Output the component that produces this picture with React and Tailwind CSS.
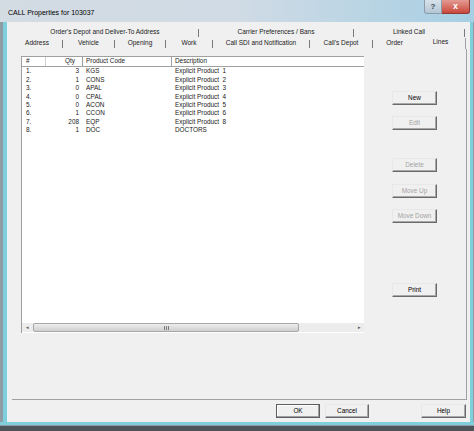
import React from 'react';

const rows = [
  ['1.', '3', 'KGS', 'Explicit Product  1'],
  ['2.', '1', 'CONS', 'Explicit Product  2'],
  ['3.', '0', 'APAL', 'Explicit Product  3'],
  ['4.', '0', 'CPAL', 'Explicit Product  4'],
  ['5.', '0', 'ACON', 'Explicit Product  5'],
  ['6.', '1', 'CCON', 'Explicit Product  6'],
  ['7.', '208', 'EQP', 'Explicit Product  8'],
  ['8.', '1', 'DOC', 'DOCTORS'],
];

const Sep = () => <div className="w-px h-[8px] bg-[#7a7a7a] shrink-0" />;

const Tab = ({ w, label, sep = true }) => (
  <div className="flex items-center shrink-0" style={{ width: w }}>
    <div className="flex-1 text-center whitespace-pre">{label}</div>
    {sep && <Sep />}
  </div>
);

const Btn = ({ label, disabled, className = '' }) => (
  <div
    className={`h-[14px] flex items-center justify-center bg-[#f0f0f0] border border-t-[#e8e8e8] border-l-[#e8e8e8] border-r-[#6a6a6a] border-b-[#6a6a6a] shadow-[inset_-1px_-1px_0_#a8a8a8] ${disabled ? 'text-[#a3a3a3]' : 'text-black'} ${className}`}
  >
    {label}
  </div>
);

export default function App() {
  return (
    <div
      className="w-[474px] h-[431px] flex flex-col overflow-hidden bg-[#9aa7b0] text-[6.4px] leading-none text-black"
      style={{ fontFamily: '"Liberation Sans", Arial, sans-serif' }}
    >
      {/* TITLE BAR */}
      <div className="h-[22px] shrink-0 flex items-start bg-gradient-to-r from-[#d3dbe3] via-[#d0dbe5] to-[#a6cfe3]">
        <div className="pl-[8px] pt-[9px] text-[7px] text-black">CALL Properties for 103037</div>
        <div className="ml-auto flex mr-[4px]">
          <div className="w-[18px] h-[14px] flex items-center justify-center bg-gradient-to-b from-[#d8e2ea] to-[#b4c6d4] border border-[#8a9cab] border-t-0 rounded-bl-[3px] text-[8px] text-[#3b4b5a] font-bold">?</div>
          <div className="w-[28px] h-[14px] flex items-center justify-center bg-gradient-to-b from-[#e49a92] to-[#c9453a] border border-[#8f3a33] border-t-0 border-l-0 rounded-br-[3px] text-white text-[9px] font-bold">x</div>
        </div>
      </div>

      {/* MIDDLE */}
      <div className="flex-1 flex min-h-0">
        <div className="w-[8px] shrink-0 flex">
          <div className="w-[3px] bg-[#8f9ca4]" />
          <div className="w-[4px] bg-[#7fcedb]" />
          <div className="w-px bg-[#e8f4f7]" />
        </div>

        {/* CLIENT */}
        <div className="flex-1 bg-[#f0f0f0] flex flex-col">
          {/* tab strip */}
          <div className="pl-[4px] pt-[5px] text-[6.5px] text-[#1a1a1a]">
            <div className="flex h-[11px] items-center">
              <Tab w={187} label="Order's Depot and Deliver-To Address" />
              <Tab w={155} label="Carrier Preferences / Bans" />
              <Tab w={111} label="Linked Call" />
            </div>
            <div className="flex h-[11px] items-center">
              <Tab w={51} label="Address" />
              <Tab w={52} label="Vehicle" />
              <Tab w={51} label="Opening" />
              <Tab w={47} label="Work" />
              <Tab w={97} label="Call SDI and Notification" />
              <Tab w={63} label="Call's Depot" />
              <Tab w={43} label="Order" sep={false} />
              <div className="w-[50px] h-[11px] flex items-start justify-center pt-[1px] border-r border-[#a0a0a0]">Lines</div>
            </div>
          </div>

          {/* tab page */}
          <div className="ml-[4px] w-[455px] h-[351px] border-r border-b border-[#a0a0a0] flex items-start">
            {/* list view */}
            <div className="ml-[9px] mt-[7px] w-[343px] h-[277px] bg-white border-l border-[#a0a0a0] flex flex-col">
              <div className="h-[11px] flex border-t border-b border-[#a0a0a0] text-[#222]">
                <div className="w-[24px] pl-[4px] flex items-center border-r border-[#d0d0d0]">#</div>
                <div className="w-[37px] pr-[7px] flex items-center justify-end border-r border-[#a0a0a0]">Qty</div>
                <div className="w-[89px] pl-[3px] flex items-center border-r border-[#a0a0a0]">Product Code</div>
                <div className="flex-1 pl-[3px] flex items-center">Description</div>
              </div>
              <div className="flex-1 pt-[0.5px]">
                {rows.map((r) => (
                  <div key={r[0]} className="h-[8.4px] flex items-center text-[#1a1a1a]">
                    <div className="w-[24px] pl-[4px]">{r[0]}</div>
                    <div className="w-[37px] pr-[4px] text-right">{r[1]}</div>
                    <div className="w-[89px] pl-[3px]">{r[2]}</div>
                    <div className="flex-1 pl-[3px] whitespace-pre">{r[3]}</div>
                  </div>
                ))}
              </div>
              {/* horizontal scrollbar */}
              <div className="h-[9px] mb-[1px] flex items-stretch bg-[#ececec]">
                <div className="w-[11px] flex items-center justify-center text-[5px] text-[#555]">◂</div>
                <div className="w-[266px] bg-gradient-to-b from-[#ededed] to-[#cfcfcf] border border-[#a8a8a8] rounded-[2px] flex items-center justify-center">
                  <div className="flex gap-[1px]">
                    <div className="w-px h-[4px] bg-[#7a7a7a]" />
                    <div className="w-px h-[4px] bg-[#7a7a7a]" />
                    <div className="w-px h-[4px] bg-[#7a7a7a]" />
                  </div>
                </div>
                <div className="flex-1" />
                <div className="w-[10px] flex items-center justify-center text-[5px] text-[#555]">▸</div>
              </div>
            </div>

            {/* buttons column */}
            <div className="ml-[28px] w-[45px] flex flex-col">
              <Btn label="New" className="mt-[42px]" />
              <Btn label="Edit" disabled className="mt-[11px]" />
              <Btn label="Delete" disabled className="mt-[28px]" />
              <Btn label="Move Up" disabled className="mt-[12px]" />
              <Btn label="Move Down" disabled className="mt-[11px]" />
              <Btn label="Print" className="mt-[60px]" />
            </div>
          </div>

          {/* bottom buttons */}
          <div className="flex mt-[4px]">
            <div className="ml-[268px] w-[44px] h-[14px] flex items-center justify-center bg-[#f0f0f0] border border-[#5e5e5e] shadow-[inset_-1px_-1px_0_#a0a0a0,inset_1px_1px_0_#ffffff]">OK</div>
            <Btn label="Cancel" className="ml-[5px] w-[44px]" />
            <Btn label="Help" className="ml-[52px] w-[45px]" />
          </div>
        </div>

        <div className="w-[4px] shrink-0 flex">
          <div className="w-[3px] bg-[#7fcedb]" />
          <div className="w-px bg-[#8f9ca4]" />
        </div>
      </div>

      {/* BOTTOM FRAME */}
      <div className="h-[9px] shrink-0 flex flex-col">
        <div className="h-[3px] bg-[#7fcedb]" />
        <div className="h-[1px] bg-[#8f9ca4]" />
        <div className="flex-1 bg-[#4d555b]" />
      </div>
    </div>
  );
}
